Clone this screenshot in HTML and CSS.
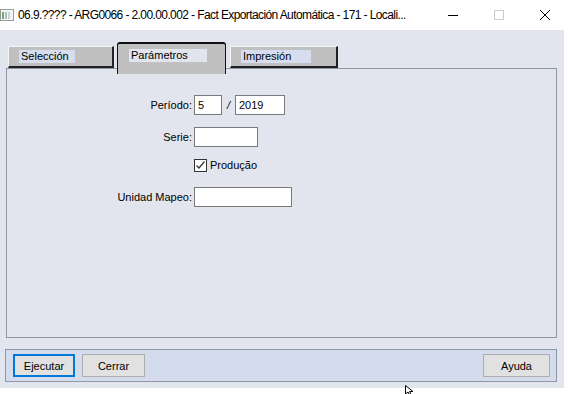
FILE: index.html
```html
<!DOCTYPE html>
<html lang="es">
<head>
    <meta charset="UTF-8">
    <title>Fact Exportación Automática</title>
    <link rel="stylesheet" href="styles.css">
</head>
<body>
    <div class="window">
        <div class="titlebar">
            <svg class="app-icon" width="14" height="12" viewBox="0 0 14 12">
                <rect x="0.5" y="0.5" width="13" height="11" fill="#f4f4f4" stroke="#9a9a9a"/>
                <rect x="2" y="3" width="2" height="7" fill="#7aa86a"/>
                <rect x="5" y="3" width="2" height="7" fill="#9fc3d8"/>
                <rect x="8" y="3" width="2" height="7" fill="#c9d6c0"/>
            </svg>
            <span class="title">06.9.???? - ARG0066 - 2.00.00.002 - Fact Exportación Automática - 171 - Locali...</span>
            <div class="controls">
                <span class="ctl"><svg width="12" height="12" viewBox="0 0 12 12"><line x1="1" y1="6.5" x2="11" y2="6.5" stroke="#000"/></svg></span>
                <span class="ctl"><svg width="12" height="12" viewBox="0 0 12 12"><rect x="1.5" y="1.5" width="9" height="9" fill="none" stroke="#cccccc"/></svg></span>
                <span class="ctl"><svg width="12" height="12" viewBox="0 0 12 12"><path d="M1 1 L11 11 M11 1 L1 11" stroke="#000" stroke-width="1"/></svg></span>
            </div>
        </div>

        <div class="client">
            <div class="tabs">
                <div class="tab tab-first"><span class="tab-label">Selección</span></div>
                <div class="tab tab-active"><span class="tab-label">Parámetros</span></div>
                <div class="tab tab-last"><span class="tab-label">Impresión</span></div>
            </div>

            <div class="panel">
                <div class="row row-first">
                    <label class="lbl">Período:</label>
                    <input class="field w-small" type="text" value="5">
                    <span class="slash">/</span>
                    <input class="field w-year" type="text" value="2019">
                </div>
                <div class="row">
                    <label class="lbl">Serie:</label>
                    <input class="field w-serie" type="text">
                </div>
                <div class="row row-check">
                    <span class="lbl"></span>
                    <span class="check">
                        <svg width="11" height="11" viewBox="0 0 11 11"><path d="M1.5 5.5 L4 8 L9.5 1.5" fill="none" stroke="#333" stroke-width="1.2"/></svg>
                    </span>
                    <span class="check-text">Produção</span>
                </div>
                <div class="row row-last">
                    <label class="lbl">Unidad Mapeo:</label>
                    <input class="field w-unidad" type="text">
                </div>
            </div>

            <div class="buttonbar">
                <button class="btn btn-focus">Ejecutar</button>
                <button class="btn">Cerrar</button>
                <button class="btn btn-help">Ayuda</button>
            </div>
        </div>

        <svg class="cursor" width="12" height="12" viewBox="0 0 12 12">
            <path d="M0.5 0.5 L0.5 9 L3 7 L5 11 L6.5 10.3 L4.6 6.5 L8 6.5 Z" fill="#fff" stroke="#000"/>
        </svg>
    </div>
</body>
</html>
```

FILE: styles.css
```css
* {
    margin: 0;
    padding: 0;
    box-sizing: border-box;
}

body {
    background-color: #ffffff;
    font-family: "Liberation Sans", Arial, sans-serif;
    font-size: 11px;
    color: #000;
}

.window {
    position: relative;
    width: 568px;
    height: 394px;
    overflow: hidden;
}

/* title bar */
.titlebar {
    height: 30px;
    display: flex;
    align-items: center;
    background-color: #fff;
}

.app-icon {
    flex-shrink: 0;
    margin-left: 0;
    margin-right: 4px;
}

.title {
    font-family: "Liberation Sans", Arial, sans-serif;
    font-size: 12px;
    letter-spacing: -0.6px;
    white-space: nowrap;
    overflow: hidden;
    flex-grow: 1;
}

.controls {
    display: flex;
    flex-shrink: 0;
    height: 30px;
}

.ctl {
    width: 46px;
    display: flex;
    align-items: center;
    justify-content: center;
}

/* main area */
.client {
    width: 564px;
    height: 358px;
    background-color: #e2e5ee;
    padding: 12px 0 0 6px;
}

.tabs {
    display: flex;
    align-items: flex-end;
    height: 26px;
    padding-left: 2px;
    position: relative;
    z-index: 2;
}

.tab {
    height: 22px;
    background-color: #c0c0c0;
    border-top: 1px solid #f4f4f4;
    border-left: 1px solid #f4f4f4;
    border-right: 2px solid #222;
    border-bottom: 2px solid #222;
    padding-top: 3px;
    padding-left: 10px;
}

.tab-first {
    width: 106px;
}

.tab-active {
    width: 109px;
    height: 32px;
    margin-left: 3px;
    margin-bottom: -6px;
    border: 1px solid #111;
    border-top-width: 2px;
    border-bottom: none;
    border-radius: 3px 3px 0 0;
    padding-left: 11px;
    padding-top: 5px;
}

.tab-last {
    width: 108px;
    margin-left: 4px;
}

.tab-label {
    display: inline-block;
    background-color: #d6ddee;
    padding: 0 2px;
    line-height: 13px;
}

.tab-first .tab-label {
    width: 56px;
}

.tab-active .tab-label {
    width: 78px;
    background-color: #e2e5ee;
}

.tab-last .tab-label {
    width: 70px;
}

.panel {
    width: 551px;
    height: 270px;
    border: 1px solid #8d97a8;
    background-color: #e2e5ee;
    position: relative;
    z-index: 1;
}

.row {
    display: flex;
    align-items: center;
    height: 20px;
    margin-top: 12px;
}

.row-first {
    margin-top: 26px;
}

.row-check {
    margin-top: 8px;
}

.lbl {
    width: 187px;
    text-align: right;
    padding-right: 2px;
}

.field {
    height: 20px;
    border: 1px solid #7a7a7a;
    background-color: #fff;
    font-family: "Liberation Sans", Arial, sans-serif;
    font-size: 11px;
    padding: 0 3px;
    outline: none;
}

.w-small {
    width: 28px;
}

.w-year {
    width: 50px;
}

.w-serie {
    width: 64px;
}

.w-unidad {
    width: 98px;
}

.slash {
    width: 13px;
    text-align: center;
    font-style: italic;
}

.check {
    width: 13px;
    height: 13px;
    border: 1px solid #333;
    background-color: #fff;
    display: flex;
    align-items: center;
    justify-content: center;
}

.check-text {
    margin-left: 3px;
}

/* bottom buttons */
.buttonbar {
    width: 552px;
    height: 33px;
    margin-top: 11px;
    margin-left: -1px;
    border: 1px solid #8d97a8;
    background-color: #d3dbec;
    display: flex;
    align-items: center;
    padding-left: 7px;
    padding-right: 6px;
}

.btn {
    height: 23px;
    width: 63px;
    border: 1px solid #adadad;
    background-color: #e1e1e1;
    font-family: "Liberation Sans", Arial, sans-serif;
    font-size: 11px;
    margin-right: 7px;
}

.btn-focus {
    width: 62px;
    border: 2px solid #0078d7;
}

.btn-help {
    margin-left: auto;
    margin-right: 0;
    width: 67px;
}

.cursor {
    position: absolute;
    left: 405px;
    top: 385px;
}
```
